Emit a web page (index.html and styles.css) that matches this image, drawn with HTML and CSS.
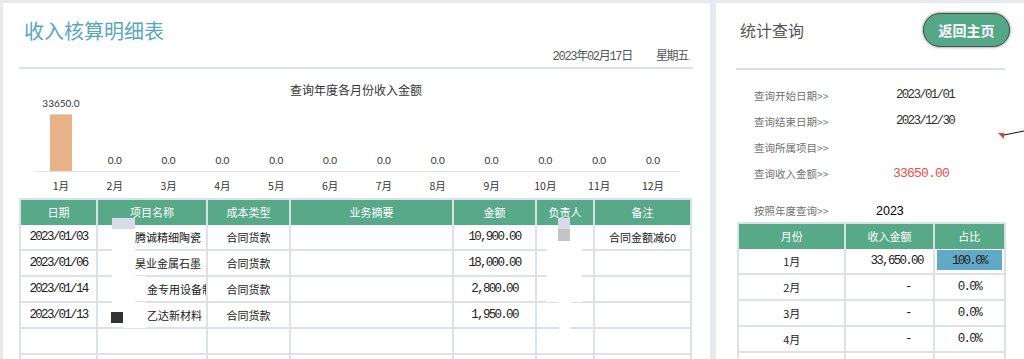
FILE: index.html
```html
<!DOCTYPE html>
<html lang="zh-CN">
<head>
<meta charset="utf-8">
<title>收入核算明细表</title>
<link rel="stylesheet" href="styles.css">
</head>
<body>
<div class="page">
  <section class="main">
    <header class="main-head">
      <h1 class="title">收入核算明细表</h1>
      <div class="date-row"><span class="num">2023年02月17日</span><span class="num">星期五</span></div>
    </header>
    <div class="chart">
      <div class="chart-title">查询年度各月份收入金额</div>
      <div class="plot">
        <div class="col"><span class="val">33650.0</span><div class="bar" style="height:57px"></div></div>
        <div class="col"><span class="val">0.0</span></div>
        <div class="col"><span class="val">0.0</span></div>
        <div class="col"><span class="val">0.0</span></div>
        <div class="col"><span class="val">0.0</span></div>
        <div class="col"><span class="val">0.0</span></div>
        <div class="col"><span class="val">0.0</span></div>
        <div class="col"><span class="val">0.0</span></div>
        <div class="col"><span class="val">0.0</span></div>
        <div class="col"><span class="val">0.0</span></div>
        <div class="col"><span class="val">0.0</span></div>
        <div class="col"><span class="val">0.0</span></div>
      </div>
      <div class="axis">
        <span>1月</span><span>2月</span><span>3月</span><span>4月</span><span>5月</span><span>6月</span>
        <span>7月</span><span>8月</span><span>9月</span><span>10月</span><span>11月</span><span>12月</span>
      </div>
    </div>
    <table class="grid detail">
      <colgroup>
        <col class="c-date"><col class="c-proj"><col class="c-type"><col class="c-sum"><col class="c-amt"><col class="c-man"><col class="c-note">
      </colgroup>
      <thead>
        <tr><th>日期</th><th>项目名称</th><th>成本类型</th><th>业务摘要</th><th>金额</th><th>负责人</th><th>备注</th></tr>
      </thead>
      <tbody>
        <tr><td class="num">2023/01/03</td><td class="proj p1">腾诚精细陶瓷</td><td>合同货款</td><td></td><td class="num">10,900.00</td><td></td><td>合同金额减60</td></tr>
        <tr><td class="num">2023/01/06</td><td class="proj p1">昊业金属石墨</td><td>合同货款</td><td></td><td class="num">18,000.00</td><td></td><td></td></tr>
        <tr><td class="num">2023/01/14</td><td class="proj p2"><span class="clip">金专用设备制</span></td><td>合同货款</td><td></td><td class="num">2,800.00</td><td></td><td></td></tr>
        <tr><td class="num">2023/01/13</td><td class="proj p2">乙达新材料</td><td>合同货款</td><td></td><td class="num">1,950.00</td><td></td><td></td></tr>
        <tr><td></td><td></td><td></td><td></td><td></td><td></td><td></td></tr>
        <tr><td></td><td></td><td></td><td></td><td></td><td></td><td></td></tr>
      </tbody>
    </table>
    <div class="mask m1"></div>
    <div class="mask m2"></div>
    <div class="mask m3"></div>
    <div class="chip chip-a"></div>
    <div class="chip chip-dark"></div>
    <div class="mask m4"></div>
    <div class="mask m5"></div>
    <div class="chip chip-b"></div>
    <div class="chip chip-c"></div>
  </section>

  <aside class="side">
    <header class="side-head">
      <h2 class="side-title">统计查询</h2>
      <button class="home-btn" type="button">返回主页</button>
    </header>
    <div class="query">
      <div class="q-row"><span class="q-label">查询开始日期&gt;&gt;</span><span class="q-val num">2023/01/01</span></div>
      <div class="q-row"><span class="q-label">查询结束日期&gt;&gt;</span><span class="q-val num">2023/12/30</span></div>
      <div class="q-row"><span class="q-label">查询所属项目&gt;&gt;</span><span class="q-val"></span></div>
      <div class="q-row"><span class="q-label">查询收入金额&gt;&gt;</span><span class="q-val total">33650.00</span></div>
    </div>
    <div class="year-row"><span class="y-label">按照年度查询&gt;&gt;</span><span class="y-val">2023</span></div>
    <table class="grid month">
      <colgroup><col class="c-m"><col class="c-inc"><col class="c-pct"></colgroup>
      <thead><tr><th>月份</th><th>收入金额</th><th>占比</th></tr></thead>
      <tbody>
        <tr><td>1月</td><td class="num right">33,650.00</td><td class="num pct-hi">100.0%</td></tr>
        <tr><td>2月</td><td class="num dash">-</td><td class="num">0.0%</td></tr>
        <tr><td>3月</td><td class="num dash">-</td><td class="num">0.0%</td></tr>
        <tr><td>4月</td><td class="num dash">-</td><td class="num">0.0%</td></tr>
        <tr><td></td><td></td><td></td></tr>
      </tbody>
    </table>
    <svg class="comment" width="28" height="14" viewBox="0 0 28 14">
      <polygon points="2,4 8,4 8,10" fill="#e53935"/>
      <line x1="8" y1="6" x2="28" y2="2" stroke="#111" stroke-width="1"/>
    </svg>
  </aside>
</div>
</body>
</html>
```

FILE: styles.css
```css
* { box-sizing: border-box; }
html, body { margin: 0; padding: 0; }
body {
  background: #e7e9ed;
  font-family: "Noto Sans CJK SC", sans-serif;
  color: #222;
  width: 1024px;
  height: 359px;
  overflow: hidden;
}
.page {
  display: flex;
  gap: 6px;
  padding: 3px 0 0 3px;
  height: 359px;
}
.num {
  font-family: "Liberation Mono", "Noto Sans CJK SC", monospace;
  font-size: 12.5px;
  letter-spacing: -1.7px;
}

/* ---------- main panel ---------- */
.main {
  position: relative;
  width: 707px;
  flex: none;
  background: #fff;
  padding: 0 17px 0 16px;
  overflow: hidden;
}
.main-head {
  border-bottom: 2px solid #d9dfe8;
  padding-bottom: 2px;
}
.title {
  margin: 14px 0 0 5px;
  font-size: 20px;
  line-height: 28px;
  font-weight: normal;
  color: #5aa5c4;
}
.date-row {
  margin-top: 4px;
  display: flex;
  justify-content: flex-end;
  gap: 24px;
  padding-right: 5px;
  line-height: 16px;
  color: #555;
}
.date-row .num { font-size: 12px; letter-spacing: -1.3px; }

.chart { margin-bottom: 5px; }
.chart-title {
  margin-top: 13px;
  text-align: center;
  font-size: 12px;
  line-height: 16px;
  color: #333;
}
.plot {
  margin-left: 15px;
  width: 646px;
  height: 74px;
  display: flex;
  align-items: flex-end;
  border-bottom: 1px solid #e2e2e2;
}
.col {
  flex: 1;
  display: flex;
  flex-direction: column;
  align-items: center;
  justify-content: flex-end;
}
.val {
  font-family: "Lato", sans-serif;
  font-size: 10px;
  line-height: 12px;
  color: #333;
  margin-bottom: 5px;
}
.bar {
  width: 22px;
  background: #e8b187;
  border-top: 1px solid #ddd5cc;
}
.axis {
  margin: 7px 0 0 15px;
  width: 646px;
  display: flex;
  font-size: 10.5px;
  line-height: 14px;
  color: #333;
}
.axis span { flex: 1; text-align: center; }

/* ---------- tables ---------- */
.grid {
  border-collapse: separate;
  border-spacing: 0;
  table-layout: fixed;
  border-left: 2px solid #dde2ea;
  border-top: 2px solid #dde2ea;
}
.grid th {
  background: #57a98a;
  color: #fff;
  font-weight: normal;
  font-size: 11px;
  line-height: 25px;
  padding: 0;
  border-right: 2px solid #d6e2de;
  text-align: center;
}
.grid td {
  padding: 0;
  font-size: 11px;
  line-height: 24px;
  height: 26px;
  border-right: 2px solid #dde2ea;
  border-bottom: 2px solid #dde2ea;
  text-align: center;
  white-space: nowrap;
  overflow: hidden;
  color: #222;
}
.grid td.num { font-size: 12.5px; }
.detail { width: 673px; }
.c-date { width: 77px; }
.c-proj { width: 110px; }
.c-type { width: 83px; }
.c-sum { width: 163px; }
.c-amt { width: 83px; }
.c-man { width: 58px; }
.c-note { width: 97px; }
.detail td.proj { text-align: left; }
.detail td.p1 { padding-left: 37px; }
.detail td.p2 { padding-left: 49px; }
.clip { display: inline-block; width: 59px; overflow: hidden; vertical-align: top; white-space: nowrap; }

.mask { position: absolute; background: #fff; }
.m1 { left: 109px; top: 222px; width: 23px; height: 84px; }
.m2 { left: 109px; top: 273px; width: 34px; height: 24px; }
.m3 { left: 120px; top: 299px; width: 23px; height: 26px; }
.chip { position: absolute; }
.chip-a { left: 109px; top: 215px; width: 23px; height: 11px; background: #d8dce4; }
.chip-dark { left: 108px; top: 309px; width: 12px; height: 11px; background: #333; }
.m4 { left: 544px; top: 238px; width: 35px; height: 61px; }
.m5 { left: 556px; top: 299px; width: 11px; height: 28px; }
.chip-b { left: 555px; top: 215px; width: 12px; height: 11px; background: #d8dce4; }
.chip-c { left: 555px; top: 226px; width: 12px; height: 12px; background: #c4c4c4; }

/* ---------- side panel ---------- */
.side {
  position: relative;
  width: 308px;
  flex: none;
  background: #fff;
  padding: 0 19px 0 20px;
  overflow: hidden;
}
.side-head {
  display: flex;
  align-items: center;
  justify-content: space-between;
  padding: 10px 0 21px 4px;
  border-bottom: 2px solid #d9dfe8;
}
.side-title {
  margin: 0;
  font-size: 16px;
  line-height: 24px;
  font-weight: normal;
  color: #555;
}
.home-btn {
  margin-right: -5px;
  width: 87px;
  height: 34px;
  border-radius: 17px;
  border: 1px solid #45524d;
  background: #55a887;
  box-shadow: 0 0 3px rgba(0,0,0,0.6);
  color: #fff;
  font-family: "Noto Sans CJK SC", sans-serif;
  font-weight: bold;
  font-size: 14px;
  padding: 0;
}
.query { margin-top: 12px; }
.q-row {
  display: flex;
  align-items: center;
  height: 26px;
  padding-left: 18px;
}
.q-label {
  width: 142px;
  flex: none;
  font-size: 10.5px;
  color: #707070;
}
.q-val { font-size: 11px; color: #333; }
.q-val.num { font-size: 12.5px; }
.q-val.total {
  margin-left: -3px;
  font-family: "Liberation Mono", monospace;
  font-size: 13px;
  letter-spacing: -0.8px;
  color: #f04a4a;
}
.year-row {
  margin-top: 13px;
  display: flex;
  align-items: center;
  height: 23px;
  padding-left: 18px;
}
.y-label {
  width: 122px;
  flex: none;
  font-size: 10.5px;
  color: #707070;
}
.y-val {
  font-family: "Liberation Sans", sans-serif;
  font-size: 12.5px;
  color: #000;
}
.month { width: 269px; margin-left: 1px; }
.c-m { width: 107px; }
.c-inc { width: 88px; }
.c-pct { width: 71px; }
.month td.right { text-align: right; padding-right: 10px; }
.month td.dash { text-align: right; padding-right: 22px; }
.month td.pct-hi {
  background: #62a9c5;
  box-shadow: inset 0 0 0 1px #fff, inset 0 -1px 0 2px #fff;
}
.comment { position: absolute; left: 280px; top: 126px; }
```
